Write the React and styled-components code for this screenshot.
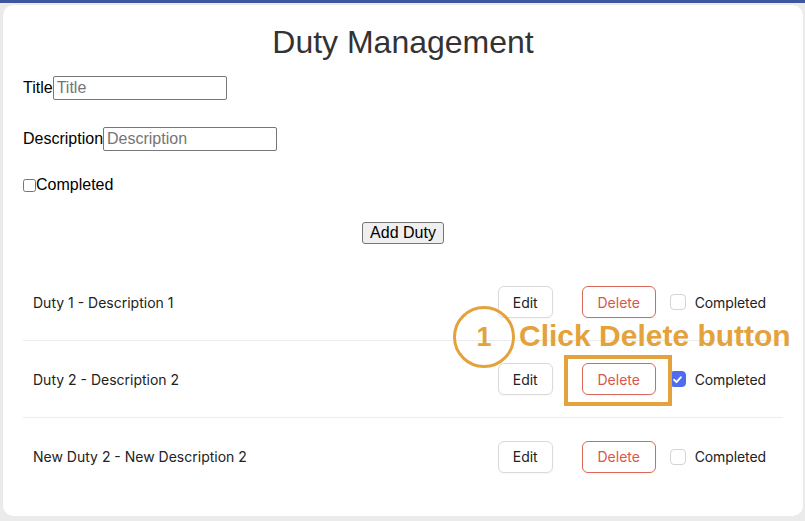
import React from "react";
import styled, { createGlobalStyle } from "styled-components";

const Global = createGlobalStyle`
  html, body { margin: 0; padding: 0; }
  body { background: #ebebeb; font-family: "Liberation Sans", Arial, sans-serif; }
  * { box-sizing: border-box; }
`;

const TopBar = styled.div`
  height: 3px;
  background: #3d569e;
`;

const Card = styled.div`
  position: relative;
  margin: 2px 2px 0 3px;
  padding-top: 19px;
  height: 511px;
  background: #ffffff;
  border-radius: 10px;
  box-shadow: 0 0 1px rgba(0,0,0,0.08);
`;

const Heading = styled.h1`
  margin: 0;
  font-size: 32px;
  line-height: 37px;
  font-weight: normal;
  color: #333;
  text-align: center;
`;

const Form = styled.div`
  padding-left: 20px;
  display: flex;
  flex-direction: column;
`;

const Field = styled.label`
  display: flex;
  align-items: center;
  height: 24px;
  margin-top: ${(p) => p.$mt}px;
  font-size: 16px;
  color: #000;
`;

const TextInput = styled.input`
  width: 174px;
  height: 24px;
  border: 1px solid #767676;
  border-radius: 2px;
  padding: 1px 3px;
  font-family: "Liberation Sans", Arial, sans-serif;
  font-size: 16px;
  color: #000;
  &::placeholder { color: #757575; }
`;

const CheckRow = styled.label`
  display: flex;
  align-items: center;
  height: 18px;
  margin-top: 25px;
  font-size: 16px;
  color: #000;
  input { margin: 0; width: 13px; height: 13px; }
`;

const ButtonRow = styled.div`
  display: flex;
  justify-content: center;
  margin-top: 28px;
`;

const AddButton = styled.button`
  height: 22px;
  padding: 0 7px;
  font-family: "Liberation Sans", Arial, sans-serif;
  font-size: 16px;
  color: #000;
  background: #efefef;
  border: 1px solid #767676;
  border-radius: 3px;
`;

const List = styled.div`
  margin: 20px 20px 0;
`;

const Row = styled.div`
  display: flex;
  align-items: center;
  justify-content: space-between;
  height: 77px;
  padding: 0 17px 0 10px;
  border-bottom: ${(p) => (p.$last ? "none" : "1px solid #ececec")};
  font-family: Inter, "Noto Sans", sans-serif;
  font-size: 14px;
  color: #222;
`;

const Actions = styled.div`
  display: flex;
  align-items: center;
`;

const SmallButton = styled.button`
  height: 32px;
  width: ${(p) => (p.$danger ? 74 : 55)}px;
  margin-right: ${(p) => (p.$danger ? 14 : 29)}px;
  border-radius: 6px;
  background: #fff;
  border: 1px solid ${(p) => (p.$danger ? "#d9695a" : "#dadada")};
  color: ${(p) => (p.$danger ? "#d9574a" : "#222")};
  font-family: Inter, "Noto Sans", sans-serif;
  font-size: 14px;
  box-shadow: 0 1px 2px rgba(0,0,0,0.04);
  padding: 0;
`;

const Box = styled.span`
  width: 16px;
  height: 16px;
  border-radius: 4px;
  border: 1px solid ${(p) => (p.$on ? "#4e6cf0" : "#d4d4d4")};
  background: ${(p) => (p.$on ? "#4e6cf0" : "#fff")};
  display: inline-flex;
  align-items: center;
  justify-content: center;
  margin-right: 9px;
`;

const DoneLabel = styled.label`
  display: flex;
  align-items: center;
  letter-spacing: -0.1px;
`;

const Circle = styled.div`
  position: absolute;
  left: 450px;
  top: 301px;
  width: 62px;
  height: 62px;
  border: 3.5px solid #e3a23b;
  border-radius: 50%;
  display: flex;
  align-items: center;
  justify-content: center;
  color: #e3a23b;
  font-weight: bold;
  font-size: 27px;
`;

const Callout = styled.div`
  position: absolute;
  left: 516px;
  top: 314px;
  font-size: 30px;
  line-height: 34px;
  font-weight: bold;
  color: #e3a23b;
  white-space: nowrap;
`;

const Highlight = styled.div`
  position: absolute;
  left: 561px;
  top: 350px;
  width: 108px;
  height: 51px;
  border: 4px solid #e3a23b;
`;

const duties = [
  { text: "Duty 1 - Description 1", done: false },
  { text: "Duty 2 - Description 2", done: true },
  { text: "New Duty 2 - New Description 2", done: false },
];

function Check({ on }) {
  return (
    <Box $on={on}>
      {on && (
        <svg width="11" height="11" viewBox="0 0 12 12">
          <path d="M2.2 6.3 L4.9 8.9 L9.8 3.4" fill="none" stroke="#fff" strokeWidth="2" strokeLinecap="round" strokeLinejoin="round" />
        </svg>
      )}
    </Box>
  );
}

export default function App() {
  return (
    <>
      <Global />
      <TopBar />
      <Card>
        <Heading>Duty Management</Heading>
        <Form>
          <Field $mt={15}>
            Title<TextInput placeholder="Title" />
          </Field>
          <Field $mt={27}>
            Description<TextInput placeholder="Description" />
          </Field>
          <CheckRow>
            <input type="checkbox" />Completed
          </CheckRow>
        </Form>
        <ButtonRow>
          <AddButton>Add Duty</AddButton>
        </ButtonRow>
        <List>
          {duties.map((d, i) => (
            <Row key={i} $last={i === duties.length - 1}>
              <span>{d.text}</span>
              <Actions>
                <SmallButton>Edit</SmallButton>
                <SmallButton $danger>Delete</SmallButton>
                <DoneLabel>
                  <Check on={d.done} />
                  Completed
                </DoneLabel>
              </Actions>
            </Row>
          ))}
        </List>
        <Circle>1</Circle>
        <Callout>Click Delete button</Callout>
        <Highlight />
      </Card>
    </>
  );
}
